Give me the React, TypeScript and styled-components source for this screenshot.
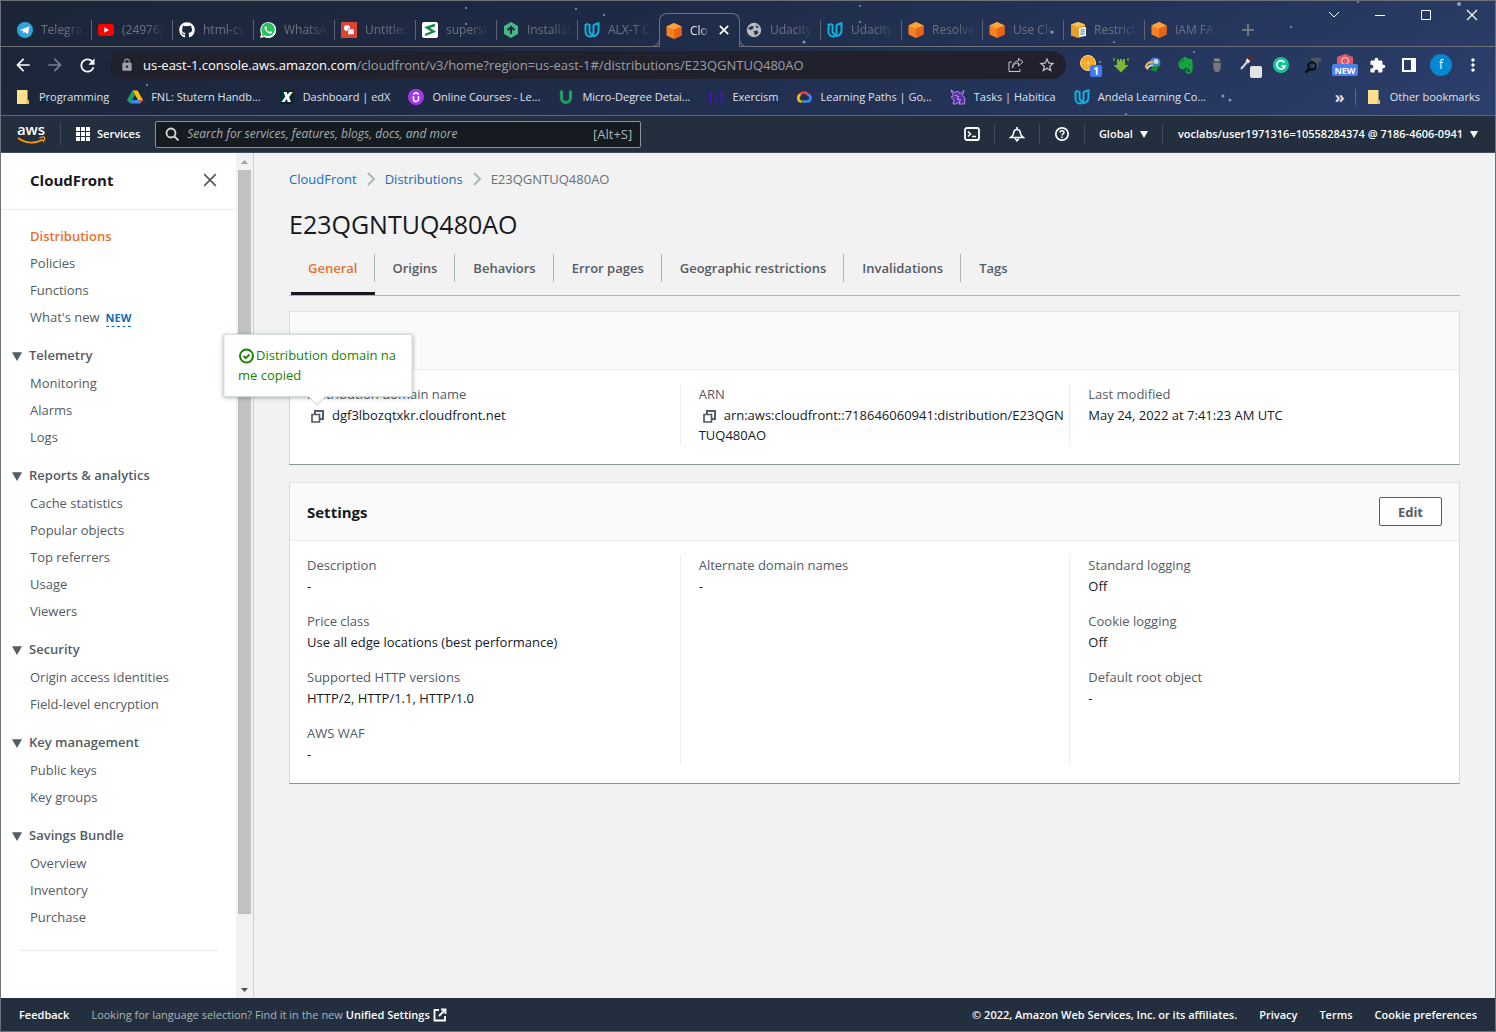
import React from "react";
import styled, { createGlobalStyle, css } from "styled-components";
import { FaGithub, FaWhatsapp } from "react-icons/fa";
import { SiEvernote } from "react-icons/si";
import {
  MdArrowBack, MdArrowForward, MdRefresh, MdLock, MdExtension, MdMoreVert, MdStarBorder,
} from "react-icons/md";

const GlobalStyle = createGlobalStyle`
  *, *::before, *::after { box-sizing: border-box; }
  body { margin: 0; background: #f2f2f2; }
  ul, dl, dd, ol { margin: 0; padding: 0; list-style: none; }
  h1, h2, h3, p { margin: 0; }
  a { color: inherit; text-decoration: none; }
  button { font: inherit; color: inherit; background: none; border: 0; padding: 0; cursor: pointer; }
`;

const frame = "#6c7178";
const ink = "#16191f";
const muted = "#545b64";
const blue = "#146eb4";
const orange = "#e6702e";
const squid = "#232f3e";

const Window = styled.div`
  display: flex;
  flex-direction: column;
  min-height: 100vh;
  border: 1px solid ${frame};
  font: 13px/20px "Open Sans", "Noto Sans", sans-serif;
  color: ${ink};
`;

/* ---------- browser chrome ---------- */

const Chrome = styled.header`
  position: relative;
  background: linear-gradient(150deg, #1c2638 0%, #1e2943 35%, #24345a 70%, #2c3f6b 100%);
  color: #dfe3ea;
  font-size: 11px;
  line-height: 16px;
  border-bottom: 1px solid #5d6675;
`;

const Sky = styled.svg`
  position: absolute;
  inset: 0;
  pointer-events: none;
`;

const TabStrip = styled.div`
  display: flex;
  align-items: flex-end;
  height: 46px;
  padding-left: 10px;
  border-bottom: 1px solid ${frame};
`;

const Tab = styled.div<{ $active?: boolean; $rule?: boolean }>`
  position: relative;
  display: flex;
  align-items: center;
  gap: 8px;
  width: 81px;
  height: 33px;
  padding: 0 2px 0 6px;
  color: #6d7380;
  ${(p) => p.$rule && css`
    &::after {
      content: "";
      position: absolute;
      right: 0;
      top: 7px;
      height: 20px;
      border-right: 1px solid #5d6471;
    }
  `}
  ${(p) => p.$active && css`
    height: 34px;
    margin-bottom: -1px;
    z-index: 1;
    color: #e6e9ee;
    background: #202d4a;
    border: 1px solid ${frame};
    border-bottom: 0;
    border-radius: 8px 8px 0 0;
    padding: 0 10px 0 6px;
    &::before, &::after {
      content: "";
      position: absolute;
      bottom: 0;
      width: 9px;
      height: 9px;
      border-bottom: 1px solid ${frame};
      background: #202d4a;
    }
    &::before { left: -9px; border-right: 1px solid ${frame}; border-bottom-right-radius: 8px; }
    &::after { right: -9px; border-left: 1px solid ${frame}; border-bottom-left-radius: 8px; }
  `}
`;

const TabTitle = styled.span`
  flex: 1;
  min-width: 0;
  overflow: hidden;
  white-space: nowrap;
  font-size: 12px;
  mask-image: linear-gradient(90deg, #000 50%, transparent 90%);
`;

const NewTab = styled.button`
  display: grid;
  place-items: center;
  width: 28px;
  height: 33px;
  margin-left: 8px;
  color: #6d7380;
`;

const WindowControls = styled.div`
  display: flex;
  align-self: flex-start;
  margin-left: auto;
  button {
    display: grid;
    place-items: center;
    width: 46px;
    height: 28px;
    color: #fff;
  }
`;

const Toolbar = styled.div`
  display: flex;
  align-items: center;
  height: 36px;
  padding: 0 6px;
  > button { display: grid; place-items: center; width: 32px; height: 28px; color: #fff; }
  > button:disabled { color: #76808e; }
`;

const Omnibox = styled.div`
  display: flex;
  align-items: center;
  flex: 1;
  gap: 9px;
  height: 28px;
  margin: 0 7px;
  padding: 0 10px;
  border-radius: 14px;
  background: #20212d;
  color: #9aa0a6;
  font-size: 13px;
`;

const Url = styled.span`
  flex: 1;
  overflow: hidden;
  white-space: nowrap;
  line-height: 20px;
  b { font-weight: 400; color: #fff; }
`;

const OmniTools = styled.div`
  display: flex;
  gap: 14px;
  color: #c3c7cd;
  button { display: grid; place-items: center; }
`;

const BookmarkBar = styled.nav`
  display: flex;
  align-items: center;
  gap: 18px;
  height: 32px;
  padding: 0 15px 4px 14px;
  white-space: nowrap;
`;

const Bookmark = styled.a`
  display: flex;
  align-items: center;
  gap: 8px;
`;

const More = styled.button`
  margin-left: auto;
  margin-right: -8px;
  height: 16px;
  padding-right: 10px;
  border-right: 1px solid #5d6a86;
  font-weight: 700;
  font-size: 16px;
  line-height: 14px;
`;

/* ---------- console header and footer ---------- */

const ConsoleBar = styled.header`
  display: flex;
  align-items: center;
  height: 37px;
  padding: 0 17px 0 15px;
  background: ${squid};
  border-bottom: 1px solid #414d5c;
  color: #fff;
  font-size: 11px;
  font-weight: 600;
  white-space: nowrap;
`;

const BarItem = styled.button<{ $wide?: boolean; $last?: boolean }>`
  display: flex;
  align-items: center;
  justify-content: center;
  gap: 7px;
  height: 20px;
  padding: 0 ${(p) => (p.$last ? 0 : p.$wide ? 15 : 14)}px 0 ${(p) => (p.$wide ? 15 : 14)}px;
  & + & { border-left: 1px solid #414d5c; }
`;

const LogoLink = styled.a`
  display: block;
  height: 22px;
  padding-right: 14px;
  border-right: 1px solid #414d5c;
`;

const SearchBox = styled.label`
  display: flex;
  align-items: center;
  gap: 8px;
  flex: 0 1 486px;
  height: 27px;
  padding: 0 8px 0 9px;
  border: 1px solid #879596;
  border-radius: 2px;
  background: #161a21;
  color: #aab7b8;
  font-size: 13px;
  font-weight: 400;
  input {
    flex: 1;
    min-width: 0;
    border: 0;
    padding: 0;
    outline: 0;
    background: none;
    font: inherit;
    font-size: 12px;
    font-style: italic;
    color: #fff;
  }
  input::placeholder { color: #a3b0b1; opacity: 1; }
`;

const BarRight = styled.div`
  display: flex;
  align-items: center;
  margin-left: auto;
`;

const Footer = styled.footer`
  display: flex;
  align-items: center;
  gap: 22px;
  height: 33px;
  padding: 0 18px;
  background: ${squid};
  color: #fff;
  font-size: 11px;
  font-weight: 600;
  white-space: nowrap;
`;

const LanguageNote = styled.p`
  display: flex;
  align-items: center;
  gap: 3px;
  flex: 1;
  min-width: 0;
  font-weight: 400;
  color: #aab7b8;
  a { display: flex; align-items: center; gap: 3px; color: #fff; font-weight: 600; }
`;

/* ---------- page body ---------- */

const Body = styled.div`
  display: flex;
  flex: 1;
`;

const Sidebar = styled.aside`
  flex: 0 0 235px;
  background: #fff;
  color: ${muted};
`;

const SideHeader = styled.div`
  display: flex;
  align-items: center;
  justify-content: space-between;
  height: 57px;
  padding: 0 19px 2px 29px;
  border-bottom: 1px solid #eaeded;
  h2 { color: ${ink}; font-size: 15px; font-weight: 700; }
  button { display: grid; }
`;

const SideNav = styled.nav`
  padding: 13px 18px 0 11px;
`;

const LinkList = styled.ul`
  padding-left: 18px;
  line-height: 27px;
`;

const SideLink = styled.a<{ $current?: boolean }>`
  ${(p) => p.$current && css`color: ${orange}; font-weight: 600;`}
`;

const NewMark = styled.span`
  display: inline-block;
  margin-left: 6px;
  padding-bottom: 1px;
  border-bottom: 1px dashed ${blue};
  color: ${blue};
  font-size: 11px;
  line-height: 14px;
  font-weight: 700;
`;

const Section = styled.section`
  margin-top: 10px;
`;

const SectionToggle = styled.button`
  display: flex;
  align-items: center;
  gap: 7px;
  height: 27px;
  margin-bottom: 2px;
  font-weight: 600;
  svg { margin-top: 3px; }
`;

const SideRule = styled.hr`
  margin: 19px 0 0 8px;
  border: 0;
  border-top: 1px solid #eaeded;
`;

const ScrollTrack = styled.div`
  display: flex;
  flex-direction: column;
  align-items: center;
  flex: 0 0 18px;
  background: #f1f1f1;
  border-right: 1px solid #ccd0d2;
  svg { flex: 0 0 17px; }
`;

const ScrollThumb = styled.div`
  width: 13px;
  flex: 0 1 88%;
  margin-bottom: auto;
  background: #c1c1c1;
`;

const Main = styled.main`
  flex: 1;
  min-width: 0;
  padding: 16px 35px 40px;
  background: #f2f2f2;
`;

const Crumbs = styled.ol`
  display: flex;
  align-items: center;
  gap: 9px;
  color: #687078;
  li { display: flex; align-items: center; gap: 9px; }
  a { color: ${blue}; }
`;

const Title = styled.h1`
  margin-top: 19px;
  font-size: 25px;
  line-height: 32px;
  font-weight: 400;
`;

const PageTabs = styled.div`
  display: flex;
  align-items: center;
  height: 56px;
  border-bottom: 1px solid #aab7b8;
  padding-left: 2px;
`;

const PageTab = styled.button<{ $active?: boolean }>`
  display: flex;
  height: 55px;
  align-items: center;
  font-weight: 600;
  color: ${muted};
  span { padding: 4px 17px; border-right: 1px solid #aab7b8; }
  &:last-child span { border-right: 0; }
  & + & span { padding-left: 18px; }
  ${(p) => p.$active && css`
    color: ${orange};
    border-bottom: 3px solid ${ink};
    padding-top: 3px;
  `}
`;

const Panel = styled.section`
  margin-top: 15px;
  background: #fff;
  border: 1px solid #e3e6e6;
  border-left-color: #d5dbdb;
  border-right-color: #d5dbdb;
  border-bottom-color: #879596;
  & + & { margin-top: 17px; }
`;

const PanelHeader = styled.div`
  display: flex;
  align-items: center;
  justify-content: space-between;
  height: 58px;
  padding: 0 17px;
  background: #fafafa;
  border-bottom: 1px solid #eaeded;
  h2 { font-size: 15px; font-weight: 700; }
`;

const EditButton = styled.button`
  height: 29px;
  padding: 0 18px;
  border: 1px solid ${muted};
  border-radius: 2px;
  background: #fff;
  color: ${muted};
  font-weight: 700;
`;

const Columns = styled.div`
  display: grid;
  grid-template-columns: repeat(3, 1fr);
  padding: 14px 0 19px;
`;

const Column = styled.dl`
  display: flex;
  flex-direction: column;
  gap: 15px;
  padding: 0 2px 0 17px;
  & + & { border-left: 1px solid #eaeded; padding-left: 18px; }
  dt { color: ${muted}; margin-bottom: 1px; }
  dd { word-break: break-all; min-height: 20px; }
`;

const CopyAnchor = styled.span`
  display: inline-block;
  position: relative;
  height: 13px;
  margin: 0 8px 0 4px;
  vertical-align: -3px;
`;

const CopyButton = styled.button`
  display: block;
  svg { display: block; }
`;

const Popover = styled.div`
  position: absolute;
  left: 50%;
  bottom: calc(100% + 13px);
  transform: translateX(-50%);
  width: 189px;
  padding: 10px 14px 11px;
  background: #fff;
  border: 1px solid #d5dbdb;
  border-radius: 2px;
  box-shadow: 0 1px 4px rgba(0, 28, 36, 0.3);
  color: #1d8102;
  svg { vertical-align: -4px; margin-right: 2px; }
  &::after {
    content: "";
    position: absolute;
    left: calc(50% - 7px);
    bottom: -7px;
    width: 13px;
    height: 13px;
    background: #fff;
    border: solid #d5dbdb;
    border-width: 0 1px 1px 0;
    transform: rotate(45deg);
  }
`;

/* ---------- drawings ---------- */

const Svg = ({ s = 16, children, box = 16 }: { s?: number; box?: number; children: React.ReactNode }) => (
  <svg width={s} height={s} viewBox={`0 0 ${box} ${box}`} fill="none" aria-hidden="true">{children}</svg>
);

const Cube = () => (
  <Svg>
    <path d="M8 0 15.500 3.500v9L8 16 .5 12.500v-9z" fill="#f58220" />
    <path d="M8 0 15.500 3.500 8 6.500.5 3.500z" fill="#fba33c" />
    <path d="M8 6.500 15.500 3.500v9L8 16z" fill="#e8641b" />
  </Svg>
);
const Udacity = () => (
  <Svg>
    <path d="M4.500 1.800 1.500 3v6.500c0 3 2 5 4.500 5s3.500-1.500 3.500-4V2.800" stroke="#12b0dc" strokeWidth="2" />
    <path d="M5.500 2v7c0 2 1 3 3 3.300M9.500 3l5-1.800V8c0 3.500-2 5.800-5.500 6.200" stroke="#12b0dc" strokeWidth="2" />
  </Svg>
);
const Folder = () => (
  <Svg><path d="M2 1h10.500v10.500H14V15H2z" fill="#ffe08a" /><path d="M11 15v-3.500h3V15z" fill="#f0c04d" /></Svg>
);

const icons: Record<string, React.ReactNode> = {
  telegram: <Svg><circle cx="8" cy="8" r="8" fill="#2ea5dc" /><path d="m3 8 9.500-3.800L11 12.300 8 10l-1.500 1.500L6 9z" fill="#fff" /></Svg>,
  youtube: <Svg><rect y="2" width="16" height="12" rx="3" fill="#f00" /><path d="m6.300 5.300 4.700 2.700-4.700 2.700z" fill="#fff" /></Svg>,
  github: <FaGithub size={16} color="#fff" />,
  whatsapp: (
    <Svg>
      <path d="M0 16 1.200 11.800A8 8 0 1 1 4.300 15z" fill="#fff" />
      <path d="M1.800 14.200 2.600 11.500a6.700 6.700 0 1 1 2.300 2z" fill="#22c55a" />
      <path d="M5.400 4.200c-1.200.6-1.200 2 0 4s3.500 3.500 5 3.400c1-.1 1.600-.9 1.600-1.700L10.200 9l-.9 1C8 9.500 7 8.500 6.300 7.200l.8-1L6.300 4.200z" fill="#fff" />
    </Svg>
  ),
  shapes: <Svg><rect width="16" height="16" fill="#dc4437" /><circle cx="6" cy="6" r="3" fill="#fff" /><rect x="7" y="7" width="6" height="5.500" fill="#fff" stroke="#dc4437" strokeWidth=".6" /></Svg>,
  supersimple: <Svg><rect width="16" height="16" rx="2" fill="#fff" /><path d="M13 3 5 5.500l6.500 4L3 13" stroke="#16864a" strokeWidth="2.400" /></Svg>,
  nodejs: <Svg><path d="m8 0 7 4v8l-7 4-7-4V4z" fill="#44b886" /><path d="M8 12V5M4.500 8.300 8 4.800l3.500 3.500" stroke="#1e2943" strokeWidth="2" /></Svg>,
  udacity: <Udacity />,
  cube: <Cube />,
  globe: <Svg><circle cx="8" cy="8" r="7.200" fill="#b9bdc4" /><path d="M2 6.500 5 4l3 .5L7 7 4.500 8zM9 3l4 2-2 1.500zM7.500 9l4-.5L12.500 11 9 13.500z" fill="#2b3648" /></Svg>,
  bucket: <Svg><path d="m8 0 7 2.500v11L8 16l-7-2.500v-11z" fill="#e79f27" /><path d="m8 0 7 2.500L8 5 1 2.500z" fill="#f7c35f" /><path d="m9 6 7-1v9l-7 1z" fill="#e9f3f8" /><path d="m10.500 8 4-.5m-4 2.600 4-.5m-4 2.600 4-.5" stroke="#3a89a8" /></Svg>,
  drive: <Svg><path d="M5.500 1.500h5L16 11h-5z" fill="#fbbc04" /><path d="M5.500 1.500 8 6l-5 8.500L0 11z" fill="#1ea362" /><path d="M5.300 11H16l-3 3.500H3z" fill="#4285f4" /><path d="M12.500 11H16l-2.500 3.500z" fill="#ea4335" /></Svg>,
  edx: <Svg><rect x="1" y="1" width="14" height="14" fill="#052a2c" /><text x="8" y="13" textAnchor="middle" fontFamily="Open Sans, sans-serif" fontStyle="italic" fontWeight="800" fontSize="14" fill="#fff">X</text></Svg>,
  udemy: <Svg><circle cx="8" cy="8" r="8" fill="#a435f0" /><path d="M5.500 7v3a2.500 2.500 0 0 0 5 0V7M5.300 5.200 8 3.600l2.700 1.600" stroke="#fff" strokeWidth="1.600" /></Svg>,
  green: <Svg><path d="M3.500 1.500V9a4.500 4.500 0 0 0 9 0V1.500" stroke="#138a55" strokeWidth="3.400" /><path d="M3.500 1.500V9a4.500 4.500 0 0 0 9 0V1.500" stroke="#35b779" strokeWidth="1" /></Svg>,
  exercism: <Svg><path d="M4 2C1.500 2 3.500 6.500 1 8c2.500 1.500.5 6 3 6M12 2c2.500 0 .5 4.500 3 6-2.500 1.500-.5 6-3 6M5.500 6.500h1m3 0h1M6 9.500c1 1.200 3 1.200 4 0" stroke="#4a12c8" strokeWidth="1.600" /></Svg>,
  cloud: <Svg><path d="M4 6a4.500 4.500 0 0 1 8 0" stroke="#ea4335" strokeWidth="2.600" /><path d="M11.500 5.500a3.600 3.600 0 0 1 .5 7H8" stroke="#4285f4" strokeWidth="2.600" /><path d="M8 12.500H4.500" stroke="#34a853" strokeWidth="2.600" /><path d="M5 12.500a3.500 3.500 0 0 1-.5-6.700" stroke="#fbbc04" strokeWidth="2.600" /></Svg>,
  habitica: <Svg><path d="m1 1 4 2.500L8 2l2 3 4-3.500-1.500 5L15 9l-.5 6H9l1-3-4 3H3l1-4-3-3 2.500-1z" fill="#5a2fa8" stroke="#c6a8f2" strokeWidth=".8" /><path d="m5 6 4 2-2 2 4 1" stroke="#c6a8f2" /></Svg>,
  folder: <Folder />,
};

const Caret = ({ color = "#fff", w = 8 }) => (
  <svg width={w} height={w - 1} viewBox="0 0 8 7" aria-hidden="true"><path d="M0 0h8L4 7z" fill={color} /></svg>
);

const CrossIcon = ({ s = 12, color = "#fff", sw = 1.2 }) => (
  <svg width={s} height={s} viewBox="0 0 12 12" aria-hidden="true"><path d="m1 1 10 10M11 1 1 11" stroke={color} strokeWidth={sw} /></svg>
);

const Chevron = () => (
  <svg width="10" height="14" viewBox="0 0 10 14" fill="none" aria-hidden="true"><path d="m2 1 6 6-6 6" stroke="#aab7b8" strokeWidth="2" /></svg>
);

const CopyIcon = () => (
  <svg width="13" height="13" viewBox="0 0 13 13" fill="none" aria-hidden="true">
    <path d="M4 4V1h8v8H9" stroke={muted} strokeWidth="2" /><path d="M1 4.500h7.500V12H1z" stroke={muted} strokeWidth="1.700" />
  </svg>
);

const AwsLogo = () => (
  <svg width="30" height="22" viewBox="0 0 30 22" role="img" aria-label="aws">
    <text x="15" y="12" textAnchor="middle" fontFamily="Open Sans, sans-serif" fontWeight="600" fontSize="15" fill="#fff">aws</text>
    <path d="M2 15c7.500 5.500 17 6 25 1.500" stroke="#f90" strokeWidth="1.700" fill="none" />
    <path d="M23.500 14.800c2-.8 4.500-1 5-.5s0 3-1.500 4.700" stroke="#f90" strokeWidth="1.300" fill="none" />
  </svg>
);

const extensions: [string, React.ReactNode][] = [
  ["Clock", <svg width="26" height="26" viewBox="0 0 26 26"><circle cx="12" cy="11" r="7.500" fill="#f9a11b" stroke="#ffe0a8" /><path d="M12 5v12M6 11h12M8 7l8 8m0-8-8 8" stroke="#ffc96b" strokeWidth=".8" /><rect x="14" y="13" width="12" height="12" rx="2" fill="#3f7ce8" /><text x="20" y="23" textAnchor="middle" fontFamily="Open Sans, sans-serif" fontWeight="700" fontSize="10" fill="#fff">1</text></svg>],
  ["Downloader", <Svg s={16}><path d="M4 2h2v2h1V2h2v2h1V2h2v6h3.500L8 15.500.5 8H4z" fill="#7cb82c" /><path d="M1 1v3m14-3v3" stroke="#6aa524" strokeWidth="1.500" /></Svg>],
  ["Download manager", <Svg><circle cx="10" cy="6" r="5.500" fill="#4a86c8" /><circle cx="11" cy="4.500" r="2.500" fill="#c9dcec" /><path d="M1 11C1 7 4 4.500 8 5.500" stroke="#e8b04a" strokeWidth="2.500" /><path d="M2 12.500C3 9 5 8 8 8.500" stroke="#f4f0e0" strokeWidth="1.500" /><path d="M6 8.500 9 10l6-2-4 7-7-2.500 3-.8z" fill="#178a28" /></Svg>],
  ["Evernote", <SiEvernote size={17} color="#12a838" />],
  ["Robot", <Svg><path d="M4 6h8l-.5 6L9.500 15h-3l-2-3z" fill="#77787a" /><rect x="5" y="1.500" width="6" height="3" rx="1" fill="#8b8b8b" /><path d="M3 5.200h10" stroke="#4a4a4c" /></Svg>],
  ["Picker", <svg width="26" height="26" viewBox="0 0 26 26"><path d="m5 17 7-8" stroke="#d3d6da" strokeWidth="2" /><path d="m11 10 2-2.500" stroke="#efefef" strokeWidth="4" /><path d="m13 8 4-4.500" stroke="#5a2b22" strokeWidth="3.500" /><rect x="14" y="14" width="12" height="12" rx="2" fill="#e3e4e6" /></svg>],
  ["Grammarly", <Svg><circle cx="8" cy="8" r="8" fill="#15c39a" /><path d="M11.500 5.500A4.200 4.200 0 1 0 12 9H8.500" stroke="#fff" strokeWidth="1.600" /></Svg>],
  ["Inspector", <Svg><path d="M6 1h10v4h-3v6H9z" fill="#52555c" /><circle cx="7" cy="9" r="3.700" stroke="#07090c" strokeWidth="2" /><path d="m4.500 12-4 3.500" stroke="#07090c" strokeWidth="2.500" /></Svg>],
  ["Guard", <svg width="26" height="26" viewBox="0 0 26 26"><path d="m13 2 8 3v9H5V5z" fill="#e05a68" /><circle cx="13" cy="9" r="3.500" stroke="#f7d4d8" fill="none" /><rect y="12" width="26" height="12" rx="2" fill="#4a80ea" /><text x="13" y="21.500" textAnchor="middle" fontFamily="Open Sans, sans-serif" fontWeight="700" fontSize="9" fill="#fff">NEW</text></svg>],
  ["Extensions", <MdExtension size={17} color="#fff" />],
  ["Side panel", <Svg s={14} box={14}><path d="M1 1h12v12H1z" stroke="#fff" strokeWidth="2" /><path d="M9 1h4v12H9z" fill="#fff" /></Svg>],
  ["Profile", <svg width="22" height="22" viewBox="0 0 22 22"><circle cx="11" cy="11" r="11" fill="#0588d1" /><text x="11" y="15" textAnchor="middle" fontFamily="Open Sans, sans-serif" fontSize="12" fill="#fff">f</text></svg>],
  ["Menu", <MdMoreVert size={20} color="#fff" />],
];

/* ---------- data ---------- */

const tabs: [string, string][] = [
  ["telegram", "Telegra"], ["youtube", "(24976)"], ["github", "html-cs"], ["whatsapp", "WhatsA"],
  ["shapes", "Untitled"], ["supersimple", "supersi"], ["nodejs", "Installat"], ["udacity", "ALX-T C"],
  ["cube", "Clou"], ["globe", "Udacity"], ["udacity", "Udacity"], ["cube", "Resolve"],
  ["cube", "Use Clo"], ["bucket", "Restrict"], ["cube", "IAM FA"],
];

const bookmarks: [string, string][] = [
  ["folder", "Programming"], ["drive", "FNL: Stutern Handb..."], ["edx", "Dashboard | edX"],
  ["udemy", "Online Courses - Le..."], ["green", "Micro-Degree Detai..."], ["exercism", "Exercism"],
  ["cloud", "Learning Paths | Go,.."], ["habitica", "Tasks | Habitica"], ["udacity", "Andela Learning Co..."],
];

const stars: [number, number, number][] = [
  [465, 7, 1], [465, 23, 1], [575, 8, 1], [603, 14, 1], [803, 41, 1.5], [859, 5, 1], [859, 21, 1],
  [1051, 31, 1.5], [1113, 41, 1], [1290, 26, 1], [1357, 1, 1], [1458, 3, 2], [1099, 61, 1], [1193, 51, 1],
  [146, 84, 1], [476, 98, 1.5], [510, 95, 1], [1222, 95, 1.5], [1229, 99, 1.5], [1125, 113, 1],
];

const sections: [string, string[]][] = [
  ["Telemetry", ["Monitoring", "Alarms", "Logs"]],
  ["Reports & analytics", ["Cache statistics", "Popular objects", "Top referrers", "Usage", "Viewers"]],
  ["Security", ["Origin access identities", "Field-level encryption"]],
  ["Key management", ["Public keys", "Key groups"]],
  ["Savings Bundle", ["Overview", "Inventory", "Purchase"]],
];

const pageTabs = ["General", "Origins", "Behaviors", "Error pages", "Geographic restrictions", "Invalidations", "Tags"];

const settings: [string, string][][] = [
  [["Description", "-"], ["Price class", "Use all edge locations (best performance)"], ["Supported HTTP versions", "HTTP/2, HTTP/1.1, HTTP/1.0"], ["AWS WAF", "-"]],
  [["Alternate domain names", "-"]],
  [["Standard logging", "Off"], ["Cookie logging", "Off"], ["Default root object", "-"]],
];

/* ---------- components ---------- */

const BrowserChrome = () => (
  <Chrome>
    <Sky width="100%" height="100%" aria-hidden="true">
      {stars.map(([x, y, r], i) => <circle key={i} cx={x} cy={y} r={r} fill="#9db4e0" opacity=".8" />)}
    </Sky>
    <TabStrip>
      {tabs.map(([icon, title], i) => (
        <Tab key={i} $active={i === 8} $rule={i !== 7 && i !== 8 && i !== 14}>
          {icons[icon]}
          <TabTitle>{title}</TabTitle>
          {i === 8 && <button aria-label="Close tab"><CrossIcon s={10} sw={2} /></button>}
        </Tab>
      ))}
      <NewTab aria-label="New tab"><Svg s={12} box={12}><path d="M6 0v12M0 6h12" stroke="currentColor" strokeWidth="2" /></Svg></NewTab>
      <WindowControls>
        <button aria-label="Search tabs"><Svg s={10} box={10}><path d="m0 2 5 5 5-5" stroke="#fff" /></Svg></button>
        <button aria-label="Minimize"><Svg s={10} box={10}><path d="M0 5.500h10" stroke="#fff" /></Svg></button>
        <button aria-label="Maximize"><Svg s={10} box={10}><path d="M.5.5h9v9h-9z" stroke="#fff" /></Svg></button>
        <button aria-label="Close"><CrossIcon /></button>
      </WindowControls>
    </TabStrip>
    <Toolbar>
      <button aria-label="Back"><MdArrowBack size={20} /></button>
      <button aria-label="Forward" disabled><MdArrowForward size={20} /></button>
      <button aria-label="Reload"><MdRefresh size={21} /></button>
      <Omnibox>
        <MdLock size={14} />
        <Url><b>us-east-1.console.aws.amazon.com</b>/cloudfront/v3/home?region=us-east-1#/distributions/E23QGNTUQ480AO</Url>
        <OmniTools>
          <button aria-label="Share"><Svg><path d="M4 5H1v9.500h11V12M4.500 11c.5-3.500 2.500-5 6-5V9L15 4.800 10.500 1.500V4C6.500 4 4.500 7 4.500 11z" stroke="currentColor" /></Svg></button>
          <button aria-label="Bookmark this page"><MdStarBorder size={18} /></button>
        </OmniTools>
      </Omnibox>
      {extensions.map(([label, icon]) => <button key={label} aria-label={label}>{icon}</button>)}
    </Toolbar>
    <BookmarkBar aria-label="Bookmarks">
      {bookmarks.map(([icon, label]) => <Bookmark href="#" key={label}>{icons[icon]}{label}</Bookmark>)}
      <More aria-label="More bookmarks">»</More>
      <Bookmark href="#"><Folder />Other bookmarks</Bookmark>
    </BookmarkBar>
  </Chrome>
);

const ConsoleHeader = () => (
  <ConsoleBar>
    <LogoLink href="#"><AwsLogo /></LogoLink>
    <BarItem $wide>
      <Svg s={14} box={14}>
        {[0, 5, 10].map((y) => [0, 5, 10].map((x) => <rect key={`${x}-${y}`} x={x} y={y} width="4" height="4" fill="#fff" />))}
      </Svg>
      Services
    </BarItem>
    <SearchBox>
      <Svg s={14} box={14}><circle cx="6" cy="6" r="4.500" stroke="#d5dbdb" strokeWidth="1.800" /><path d="m9.500 9.500 4 4" stroke="#d5dbdb" strokeWidth="1.800" /></Svg>
      <input type="search" aria-label="Search" placeholder="Search for services, features, blogs, docs, and more" />
      [Alt+S]
    </SearchBox>
    <BarRight>
      <BarItem aria-label="CloudShell"><Svg><rect x="1" y="2" width="14" height="12" rx="2" stroke="#fff" strokeWidth="1.800" /><path d="M4 5.500 6.500 8 4 10.500M8 10.500h4" stroke="#fff" strokeWidth="1.500" /></Svg></BarItem>
      <BarItem aria-label="Notifications"><Svg><path d="M8 1v2.500M1.800 11.500C4 10 4.500 8.500 4.800 6.500 5 4.500 6.200 3.500 8 3.500s3 1 3.200 3c.3 2 .8 3.500 3 5z" stroke="#fff" strokeWidth="1.600" /><path d="M6 12.500 8 14.800l2-2.300" stroke="#fff" strokeWidth="1.500" /></Svg></BarItem>
      <BarItem aria-label="Help"><Svg><circle cx="8" cy="8" r="6.200" stroke="#fff" strokeWidth="1.700" /><path d="M6 6.500c0-2.500 4-2.500 4 0C10 8 8 7.700 8 9.500M8 10.500V12" stroke="#fff" strokeWidth="1.500" /></Svg></BarItem>
      <BarItem>Global <Caret /></BarItem>
      <BarItem $wide $last>voclabs/user1971316=10558284374 @ 7186-4606-0941 <Caret /></BarItem>
    </BarRight>
  </ConsoleBar>
);

const SideNavigation = () => (
  <Sidebar>
    <SideHeader>
      <h2>CloudFront</h2>
      <button aria-label="Close navigation"><CrossIcon s={14} color={muted} sw={1.5} /></button>
    </SideHeader>
    <SideNav>
      <LinkList>
        <li><SideLink href="#" $current>Distributions</SideLink></li>
        <li><SideLink href="#">Policies</SideLink></li>
        <li><SideLink href="#">Functions</SideLink></li>
        <li><SideLink href="#">What's new</SideLink><NewMark>NEW</NewMark></li>
      </LinkList>
      {sections.map(([name, links]) => (
        <Section key={name}>
          <SectionToggle aria-expanded="true"><Caret w={10} color={muted} />{name}</SectionToggle>
          <LinkList>{links.map((l) => <li key={l}><SideLink href="#">{l}</SideLink></li>)}</LinkList>
        </Section>
      ))}
      <SideRule />
    </SideNav>
  </Sidebar>
);

const App = () => (
  <Window>
    <GlobalStyle />
    <BrowserChrome />
    <ConsoleHeader />
    <Body>
      <SideNavigation />
      <ScrollTrack>
        <Svg s={17} box={17}><path d="m5 11 3.500-4 3.500 4z" fill="#a3a3a3" /></Svg>
        <ScrollThumb />
        <Svg s={17} box={17}><path d="m5 7 3.500 4L12 7z" fill="#505050" /></Svg>
      </ScrollTrack>
      <Main>
        <nav aria-label="Breadcrumbs">
          <Crumbs>
            <li><a href="#">CloudFront</a><Chevron /></li>
            <li><a href="#">Distributions</a><Chevron /></li>
            <li>E23QGNTUQ480AO</li>
          </Crumbs>
        </nav>
        <Title>E23QGNTUQ480AO</Title>
        <PageTabs role="tablist">
          {pageTabs.map((t, i) => (
            <PageTab key={t} role="tab" aria-selected={i === 0} $active={i === 0}><span>{t}</span></PageTab>
          ))}
        </PageTabs>
        <Panel>
          <PanelHeader />
          <Columns>
            <Column>
              <div>
                <dt>Distribution domain name</dt>
                <dd>
                  <CopyAnchor>
                    <CopyButton aria-label="Copy distribution domain name"><CopyIcon /></CopyButton>
                    <Popover role="status">
                      <Svg><circle cx="8" cy="8" r="6.500" stroke="#1d8102" strokeWidth="2" /><path d="m5 8 2.200 2.200L11 6.500" stroke="#1d8102" strokeWidth="1.800" /></Svg>
                      Distribution domain name copied
                    </Popover>
                  </CopyAnchor>
                  dgf3lbozqtxkr.cloudfront.net
                </dd>
              </div>
            </Column>
            <Column>
              <div>
                <dt>ARN</dt>
                <dd>
                  <CopyAnchor><CopyButton aria-label="Copy ARN"><CopyIcon /></CopyButton></CopyAnchor>
                  arn:aws:cloudfront::718646060941:distribution/E23QGNTUQ480AO
                </dd>
              </div>
            </Column>
            <Column><div><dt>Last modified</dt><dd>May 24, 2022 at 7:41:23 AM UTC</dd></div></Column>
          </Columns>
        </Panel>
        <Panel>
          <PanelHeader><h2>Settings</h2><EditButton>Edit</EditButton></PanelHeader>
          <Columns>
            {settings.map((col, i) => (
              <Column key={i}>{col.map(([k, v]) => <div key={k}><dt>{k}</dt><dd>{v}</dd></div>)}</Column>
            ))}
          </Columns>
        </Panel>
      </Main>
    </Body>
    <Footer>
      <a href="#">Feedback</a>
      <LanguageNote>Looking for language selection? Find it in the new <a href="#">Unified Settings
        <Svg s={14} box={14}><path d="M6 2H1.500v10.500H12V8" stroke="#fff" strokeWidth="1.800" /><path d="M8 1.500h4.500V6M12 2 6 8" stroke="#fff" strokeWidth="1.800" /></Svg></a>
      </LanguageNote>
      <span>© 2022, Amazon Web Services, Inc. or its affiliates.</span>
      <a href="#">Privacy</a>
      <a href="#">Terms</a>
      <a href="#">Cookie preferences</a>
    </Footer>
  </Window>
);

export default App;
